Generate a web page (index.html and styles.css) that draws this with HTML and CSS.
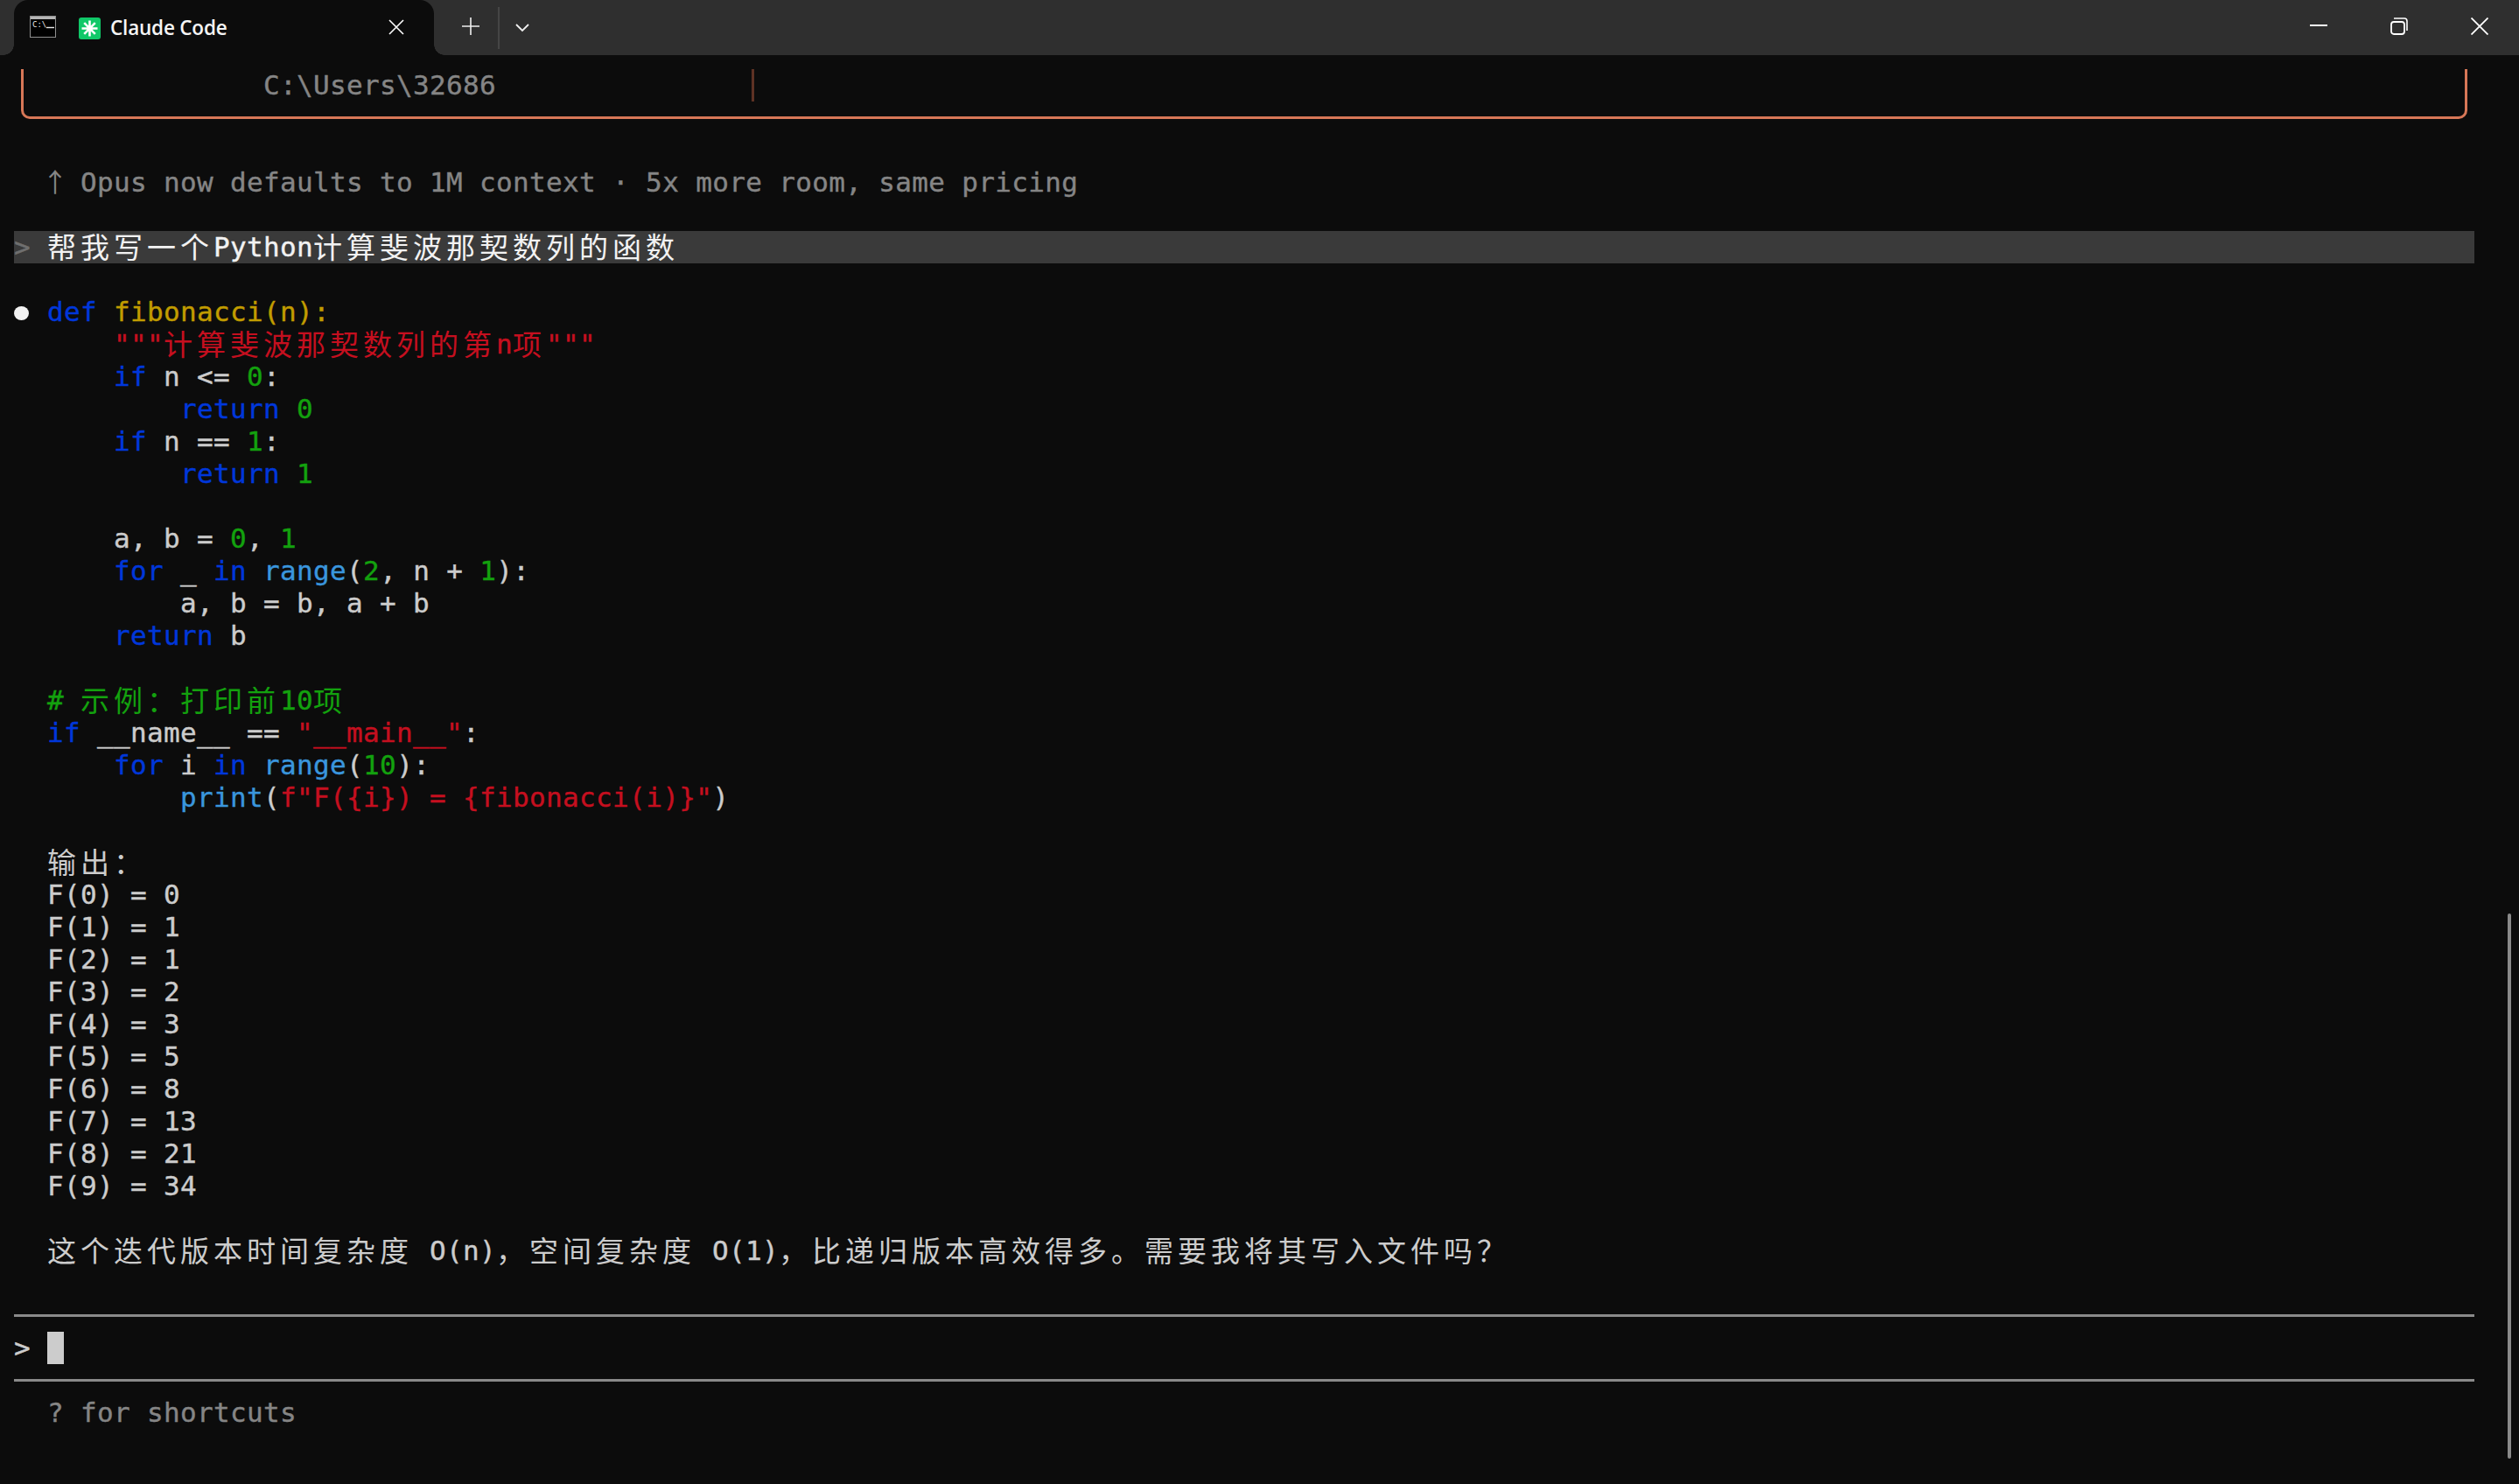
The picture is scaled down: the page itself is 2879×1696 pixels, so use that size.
FILE: index.html
```html
<!DOCTYPE html>
<html lang="zh-CN">
<head>
<meta charset="utf-8">
<title>Claude Code</title>
<link rel="stylesheet" href="styles.css">
</head>
<body>
<div class="window">
  <header class="titlebar">
    <div class="tab">
      <svg class="term-icon" viewBox="0 0 30 25" width="30" height="25" aria-hidden="true">
        <rect x="0.5" y="0.5" width="29" height="24" fill="#000" stroke="#8f8f8f"/>
        <rect x="1" y="1" width="28" height="3" fill="#b5b5b5"/>
        <text x="3" y="13" class="term-icon-text">C:\</text>
        <path d="M19 13.5h9" stroke="#e8e8e8" stroke-width="1.4"/>
      </svg>
      <svg class="app-icon" viewBox="0 0 25 25" width="25" height="25" aria-hidden="true">
        <rect width="25" height="25" rx="3" fill="#10c868"/>
        <path d="M12.5 3.5v18M3.5 12.5h18M6.2 6.2l12.6 12.6M18.8 6.2L6.2 18.8" stroke="#fff" stroke-width="2.6"/>
      </svg>
      <span class="tab-title">Claude Code</span>
      <svg class="tab-close" viewBox="0 0 18 18" width="18" height="18" aria-hidden="true">
        <path d="M1 1l16 16M17 1L1 17" stroke="#fff" stroke-width="1.6"/>
      </svg>
    </div>
    <svg class="new-tab" viewBox="0 0 20 20" width="20" height="20" aria-hidden="true">
      <path d="M10 0v20M0 10h20" stroke="#f0f0f0" stroke-width="1.6"/>
    </svg>
    <span class="tab-sep"></span>
    <svg class="chevron" viewBox="0 0 16 10" width="16" height="10" aria-hidden="true">
      <path d="M1 1l7 7 7-7" fill="none" stroke="#f0f0f0" stroke-width="1.8"/>
    </svg>
    <div class="winctl">
      <svg viewBox="0 0 20 20" width="20" height="20" aria-hidden="true"><path d="M0 9h20" stroke="#fff" stroke-width="2"/></svg>
      <svg viewBox="0 0 20 20" width="20" height="20" aria-hidden="true"><rect x="1" y="5" width="15" height="14" rx="3" fill="none" stroke="#fff" stroke-width="1.8"/><path d="M4 1h12a3 3 0 0 1 3 3v11" fill="none" stroke="#fff" stroke-width="1.6"/></svg>
      <svg viewBox="0 0 20 20" width="20" height="20" aria-hidden="true"><path d="M0.5 0.5l19 19M19.5 0.5l-19 19" stroke="#fff" stroke-width="1.8"/></svg>
    </div>
  </header>
  <main class="terminal">
    <div class="welcome-box">
      <div class="row box-row"><span class="dim">C:\Users\32686</span><span class="box-sep"></span></div>
    </div>
    <div class="row blank"></div>
    <div class="row ind1 dim"><span class="arrow">↑</span><span>Opus now defaults to 1M context · 5x more room, same pricing</span></div>
    <div class="row blank"></div>
    <div class="row user"><span class="user-mark">&gt; </span><span class="cjk">帮我写一个</span>Python<span class="cjk">计算斐波那契数列的函数</span></div>
    <div class="row blank"></div>
    <div class="row"><span class="bullet"></span><span class="kw">def</span> <span class="fn">fibonacci(n):</span></div>
    <div class="row ind2 str">"""<span class="cjk">计算斐波那契数列的第</span>n<span class="cjk">项</span>"""</div>
    <div class="row ind2"><span class="kw">if</span> n &lt;= <span class="num">0</span>:</div>
    <div class="row ind3"><span class="kw">return</span> <span class="num">0</span></div>
    <div class="row ind2"><span class="kw">if</span> n == <span class="num">1</span>:</div>
    <div class="row ind3"><span class="kw">return</span> <span class="num">1</span></div>
    <div class="row blank"></div>
    <div class="row ind2">a, b = <span class="num">0</span>, <span class="num">1</span></div>
    <div class="row ind2"><span class="kw">for</span> _ <span class="kw">in</span> <span class="bi">range</span>(<span class="num">2</span>, n + <span class="num">1</span>):</div>
    <div class="row ind3">a, b = b, a + b</div>
    <div class="row ind2"><span class="kw">return</span> b</div>
    <div class="row blank"></div>
    <div class="row ind1 num"># <span class="cjk">示例：打印前</span>10<span class="cjk">项</span></div>
    <div class="row ind1"><span class="kw">if</span> __name__ == <span class="str">"__main__"</span>:</div>
    <div class="row ind2"><span class="kw">for</span> i <span class="kw">in</span> <span class="bi">range</span>(<span class="num">10</span>):</div>
    <div class="row ind3"><span class="bi">print</span>(<span class="str">f"F({i}) = {fibonacci(i)}"</span>)</div>
    <div class="row blank"></div>
    <div class="row ind1"><span class="cjk">输出：</span></div>
    <div class="row ind1">F(0) = 0</div>
    <div class="row ind1">F(1) = 1</div>
    <div class="row ind1">F(2) = 1</div>
    <div class="row ind1">F(3) = 2</div>
    <div class="row ind1">F(4) = 3</div>
    <div class="row ind1">F(5) = 5</div>
    <div class="row ind1">F(6) = 8</div>
    <div class="row ind1">F(7) = 13</div>
    <div class="row ind1">F(8) = 21</div>
    <div class="row ind1">F(9) = 34</div>
    <div class="row blank"></div>
    <div class="row ind1"><span class="cjk">这个迭代版本时间复杂度</span> O(n)<span class="cjk">，空间复杂度</span> O(1)<span class="cjk">，比递归版本高效得多。需要我将其写入文件吗？</span></div>
    <div class="row blank"></div>
    <div class="row rule-row"><span class="rule"></span></div>
    <div class="row">&gt; <span class="cursor"></span></div>
    <div class="row rule-row"><span class="rule"></span></div>
    <div class="row ind1 dim">? for shortcuts</div>
    <div class="scrollbar"></div>
  </main>
</div>
</body>
</html>
```
FILE: styles.css
```css
* { box-sizing: border-box; }
html, body { margin: 0; height: 100%; background: #0c0c0c; overflow: hidden; }
.window { display: flex; flex-direction: column; height: 1696px; width: 2879px; }

.titlebar {
  height: 63px; flex: none; background: #2f2f2f;
  display: flex; align-items: center;
}
.tab {
  position: relative; flex: none;
  margin-left: 16px; width: 480px; height: 63px;
  background: #0c0c0c; border-radius: 16px 16px 0 0;
  display: flex; align-items: center;
  padding-left: 18px;
}
.tab::before, .tab::after {
  content: ""; position: absolute; bottom: 0; width: 12px; height: 12px;
}
.tab::before { left: -12px; background: radial-gradient(circle at 0 0, #2f2f2f 11.5px, #0c0c0c 12px); }
.tab::after { right: -12px; background: radial-gradient(circle at 100% 0, #2f2f2f 11.5px, #0c0c0c 12px); }
.term-icon { flex: none; margin-top: -3px; }
.term-icon-text { font: 9px "DejaVu Sans Mono", monospace; fill: #e8e8e8; }
.app-icon { flex: none; margin-left: 26px; margin-top: 2px; }
.tab-title {
  margin-left: 11px; width: 318px; flex: none;
  font: 600 22.5px/1 "Open Sans", sans-serif; letter-spacing: -0.2px; color: #f5f5f5; margin-top: 2px;
}
.tab-close { flex: none; margin-top: -2px; }
.new-tab { flex: none; margin-left: 32px; margin-top: -3px; }
.tab-sep { flex: none; width: 2px; height: 48px; margin-left: 21px; margin-top: 0; background: #454545; }
.chevron { flex: none; margin-left: 18px; margin-top: 0; }
.winctl {
  margin-left: auto; margin-right: 35px; margin-top: -3px;
  display: flex; gap: 72px;
}

.terminal {
  position: relative; flex: 1;
  padding: 16px 0 0 16px;
  background: #0c0c0c; color: #cccccc;
  font-family: "DejaVu Sans Mono", "Noto Sans CJK SC", monospace;
  font-size: 31px; letter-spacing: 0.34px;
  font-variant-ligatures: none;
  -webkit-text-stroke: 0.4px;
}
.row { height: 37px; line-height: 37px; white-space: pre; }
.ind1 { padding-left: 38px; }
.ind2 { padding-left: 114px; }
.ind3 { padding-left: 190px; }
.dim { color: #858585; }
.kw { color: #0037da; }
.fn { color: #c19c00; }
.str { color: #c50f1f; }
.num { color: #13a10e; }
.bi { color: #3a96dd; }
.cjk {
  font-family: "Noto Sans CJK SC", sans-serif;
  font-size: 33px; letter-spacing: 5px; line-height: 0;
  vertical-align: -2px;
  -webkit-text-stroke: 0;
}
.arrow {
  display: inline-block; width: 30px; margin-left: -6px; margin-right: 14px;
  font-family: "Noto Sans CJK SC", sans-serif; font-size: 30px; line-height: 0;
  letter-spacing: 0; text-align: left;
  -webkit-text-stroke: 0;
}

.welcome-box {
  width: 2796px; height: 57px; margin-left: 8px;
  border: 3px solid #d77757; border-top: 0;
  border-radius: 0 0 10px 10px;
}
.box-row { display: flex; padding-left: 274px; }
.box-sep { width: 3px; height: 37px; margin-left: 292px; background: #5e3224; }
.welcome-box + .row { margin-top: 17px; }

.user {
  width: 2812px; background: #3a3a3a; color: #f2f2f2;
}
.user-mark { color: #6f6f6f; }
.bullet {
  display: inline-block; width: 17px; height: 16px; margin: 0 21px 0 0;
  border-radius: 50%; background: #f2f2f2; vertical-align: 1px;
}
.rule-row { display: flex; align-items: center; }
.rule { width: 2812px; height: 3px; background: #8a8a8a; }
.cursor {
  display: inline-block; width: 19px; height: 37px; background: #cccccc; vertical-align: top;
}
.scrollbar {
  position: absolute; left: 2866px; top: 981px;
  width: 4px; height: 623px; border-radius: 2px; background: #8a8a8a;
}
```
